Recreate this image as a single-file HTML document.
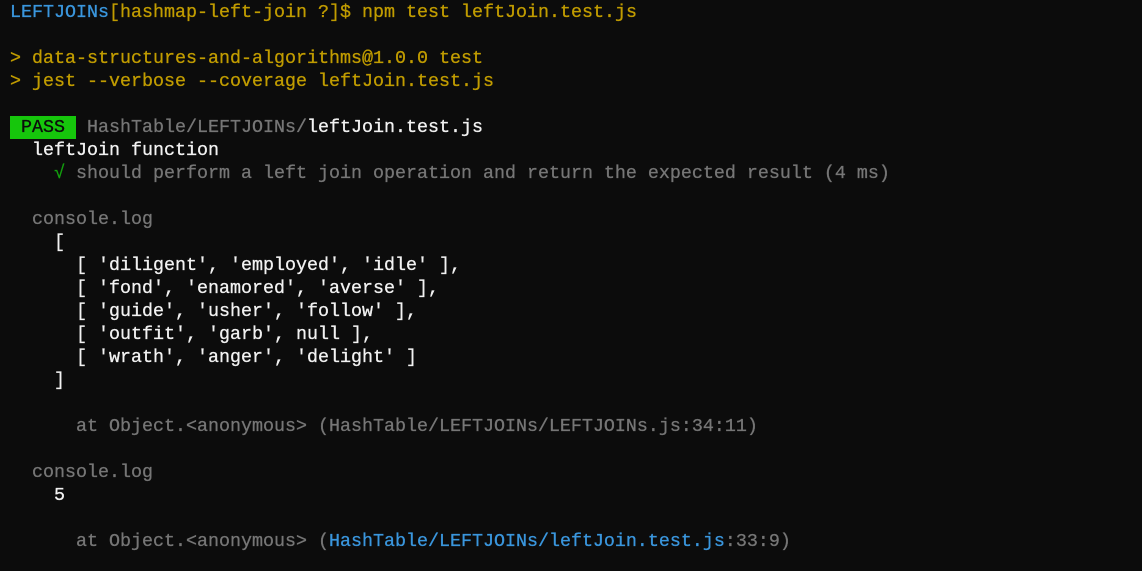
<!DOCTYPE html>
<html><head><meta charset="utf-8"><style>
html,body{margin:0;padding:0;background:#0c0c0c;width:1142px;height:571px;overflow:hidden}
pre{margin:0;position:absolute;left:10px;top:1px;font-family:"Liberation Mono",monospace;font-size:18.33px;line-height:23px;color:#cccccc;white-space:pre;-webkit-text-stroke:0.3px}
.y{color:#c19c00}.b{color:#3a96dd}.g{color:#767676}.w{color:#f2f2f2}.gr{color:#13a10e}
.pass{background:#16c60c;color:#0c0c0c;display:inline-block;height:23px;vertical-align:top}
</style></head><body>
<pre><span class="b">LEFTJOINs</span><span class="y">[hashmap-left-join ?]$ npm test leftJoin.test.js</span>

<span class="y">&gt; data-structures-and-algorithms@1.0.0 test</span>
<span class="y">&gt; jest --verbose --coverage leftJoin.test.js</span>

<span class="pass"> PASS </span> <span class="g">HashTable/LEFTJOINs/</span><span class="w">leftJoin.test.js</span>
<span class="w">  leftJoin function</span>
    <span class="gr">√</span> <span class="g">should perform a left join operation and return the expected result (4 ms)</span>

<span class="g">  console.log</span>
<span class="w">    [
      [ 'diligent', 'employed', 'idle' ],
      [ 'fond', 'enamored', 'averse' ],
      [ 'guide', 'usher', 'follow' ],
      [ 'outfit', 'garb', null ],
      [ 'wrath', 'anger', 'delight' ]
    ]</span>

<span class="g">      at Object.&lt;anonymous&gt; (HashTable/LEFTJOINs/LEFTJOINs.js:34:11)</span>

<span class="g">  console.log</span>
<span class="w">    5</span>

<span class="g">      at Object.&lt;anonymous&gt; (</span><span class="b">HashTable/LEFTJOINs/leftJoin.test.js</span><span class="g">:33:9)</span>
</pre>
</body></html>
